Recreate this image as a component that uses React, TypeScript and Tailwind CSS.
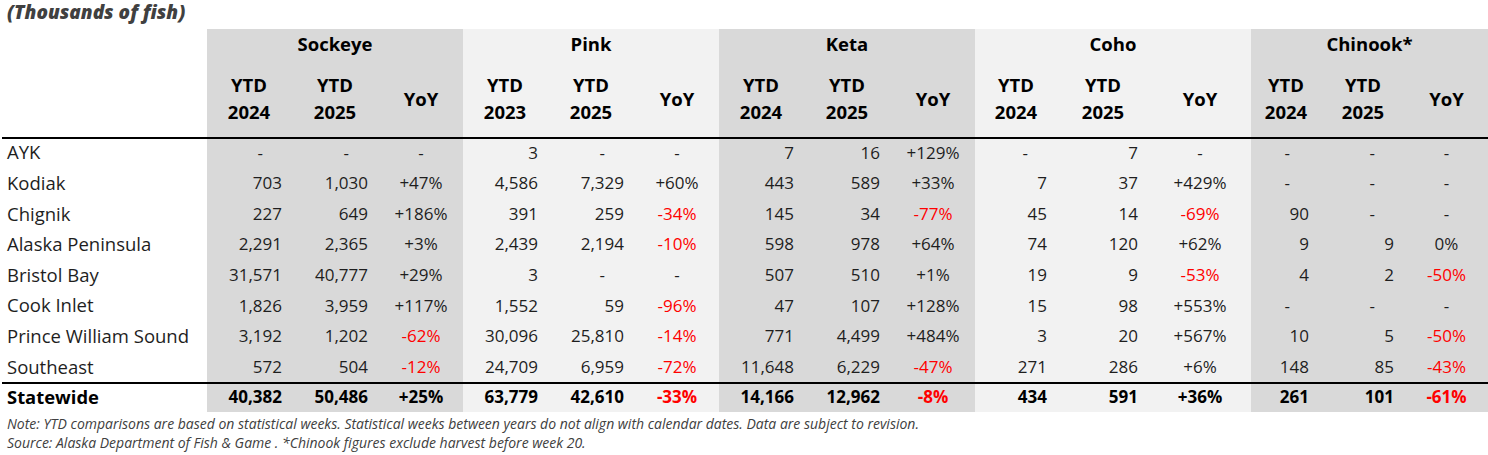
import React from "react";

type Group = {
  name: string;
  bg: string;
  y1: string;
  widths: string[];
  prs: string[];
  dashMr: string;
};

const DARK = "bg-[#d9d9d9]";
const LIGHT = "bg-[#f2f2f2]";

const groups: Group[] = [
  { name: "Sockeye", bg: DARK, y1: "2024", widths: ["w-[84px]", "w-[88px]", "w-[84px]"], prs: ["pr-[9px]", "pr-[11px]"], dashMr: "mr-[19px]" },
  { name: "Pink", bg: LIGHT, y1: "2023", widths: ["w-[84px]", "w-[88px]", "w-[84px]"], prs: ["pr-[9px]", "pr-[11px]"], dashMr: "mr-[19px]" },
  { name: "Keta", bg: DARK, y1: "2024", widths: ["w-[84px]", "w-[88px]", "w-[84px]"], prs: ["pr-[9px]", "pr-[11px]"], dashMr: "mr-[19px]" },
  { name: "Coho", bg: LIGHT, y1: "2024", widths: ["w-[82px]", "w-[92px]", "w-[102px]"], prs: ["pr-[10px]", "pr-[11px]"], dashMr: "mr-[19px]" },
  { name: "Chinook*", bg: DARK, y1: "2024", widths: ["w-[70px]", "w-[84px]", "w-[83px]"], prs: ["pr-[12px]", "pr-[11px]"], dashMr: "mr-[19px]" },
];

const groupWidths = ["w-[256px]", "w-[256px]", "w-[256px]", "w-[276px]", "w-[237px]"];

const rows: [string, string[][]][] = [
  ["AYK", [["-", "-", "-"], ["3", "-", "-"], ["7", "16", "+129%"], ["-", "7", "-"], ["-", "-", "-"]]],
  ["Kodiak", [["703", "1,030", "+47%"], ["4,586", "7,329", "+60%"], ["443", "589", "+33%"], ["7", "37", "+429%"], ["-", "-", "-"]]],
  ["Chignik", [["227", "649", "+186%"], ["391", "259", "-34%"], ["145", "34", "-77%"], ["45", "14", "-69%"], ["90", "-", "-"]]],
  ["Alaska Peninsula", [["2,291", "2,365", "+3%"], ["2,439", "2,194", "-10%"], ["598", "978", "+64%"], ["74", "120", "+62%"], ["9", "9", "0%"]]],
  ["Bristol Bay", [["31,571", "40,777", "+29%"], ["3", "-", "-"], ["507", "510", "+1%"], ["19", "9", "-53%"], ["4", "2", "-50%"]]],
  ["Cook Inlet", [["1,826", "3,959", "+117%"], ["1,552", "59", "-96%"], ["47", "107", "+128%"], ["15", "98", "+553%"], ["-", "-", "-"]]],
  ["Prince William Sound", [["3,192", "1,202", "-62%"], ["30,096", "25,810", "-14%"], ["771", "4,499", "+484%"], ["3", "20", "+567%"], ["10", "5", "-50%"]]],
  ["Southeast", [["572", "504", "-12%"], ["24,709", "6,959", "-72%"], ["11,648", "6,229", "-47%"], ["271", "286", "+6%"], ["148", "85", "-43%"]]],
];

const total: string[][] = [
  ["40,382", "50,486", "+25%"],
  ["63,779", "42,610", "-33%"],
  ["14,166", "12,962", "-8%"],
  ["434", "591", "+36%"],
  ["261", "101", "-61%"],
];

const isNeg = (v: string) => /^-\d/.test(v);

function Cells({ vals, g }: { vals: string[]; g: Group }) {
  return (
    <>
      {vals.map((v, i) => {
        const isYoY = i === 2;
        const neg = isNeg(v);
        const align = isYoY ? "justify-center" : "justify-end " + g.prs[i];
        return (
          <div key={i} className={`flex h-full items-center whitespace-nowrap ${g.widths[i]} ${g.bg} ${align} ${neg ? "text-[#ff0000]" : ""}`}>
            {v === "-" && !isYoY ? <span className={g.dashMr}>-</span> : <span>{v}</span>}
          </div>
        );
      })}
    </>
  );
}

export default function App() {
  return (
    <div className="w-[1488px] h-[455px] bg-white font-['Open_Sans',sans-serif] text-[17px] text-[#1e1e1e] overflow-hidden">
      <div className="h-[29px] pl-[7px] leading-[25px] text-[19px] font-extrabold italic text-[#404040] whitespace-nowrap">(Thousands of fish)</div>

      {/* Header */}
      <div className="flex h-[108px] text-black font-bold text-[18.5px]">
        <div className="w-[207px] shrink-0" />
        {groups.map((g, gi) => (
          <div key={g.name} className={`flex flex-col ${groupWidths[gi]} ${g.bg}`}>
            <div className="h-[30px] flex items-center justify-center">{g.name}</div>
            <div className="flex flex-1 items-center">
              {[0, 1, 2].map((i) => (
                <div key={i} className={`${g.widths[i]} text-center leading-[27px]`}>
                  {i === 2 ? "YoY" : (
                    <>
                      YTD
                      <br />
                      {i === 0 ? g.y1 : "2025"}
                    </>
                  )}
                </div>
              ))}
            </div>
          </div>
        ))}
      </div>

      <div className="relative z-10 ml-[2px] h-[2px] -mb-[2px] bg-black" />

      {rows.map(([label, vals]) => (
        <div key={label} className="flex h-[30.6px]">
          <div className="w-[207px] shrink-0 flex items-center pl-[7px] whitespace-nowrap text-[18.5px]">{label}</div>
          {groups.map((g, gi) => (
            <div key={g.name} className="flex h-full">
              <Cells vals={vals[gi]} g={g} />
            </div>
          ))}
        </div>
      ))}

      <div className="relative z-10 ml-[2px] h-[2px] -mb-[2px] bg-black" />

      <div className="flex h-[30.2px] font-bold text-black">
        <div className="w-[207px] shrink-0 flex items-center pl-[7px] text-[18.4px]">Statewide</div>
        {groups.map((g, gi) => (
          <div key={g.name} className="flex h-full">
            <Cells vals={total[gi]} g={g} />
          </div>
        ))}
      </div>

      <div className="mt-[2.5px] pl-[7px] text-[14px] leading-[19px] italic text-[#404040] whitespace-nowrap">
        <div>Note: YTD comparisons are based on statistical weeks. Statistical weeks between years do not align with calendar dates. Data are subject to revision.</div>
        <div>Source: Alaska Department of Fish &amp; Game . *Chinook figures exclude harvest before week 20.</div>
      </div>
    </div>
  );
}
